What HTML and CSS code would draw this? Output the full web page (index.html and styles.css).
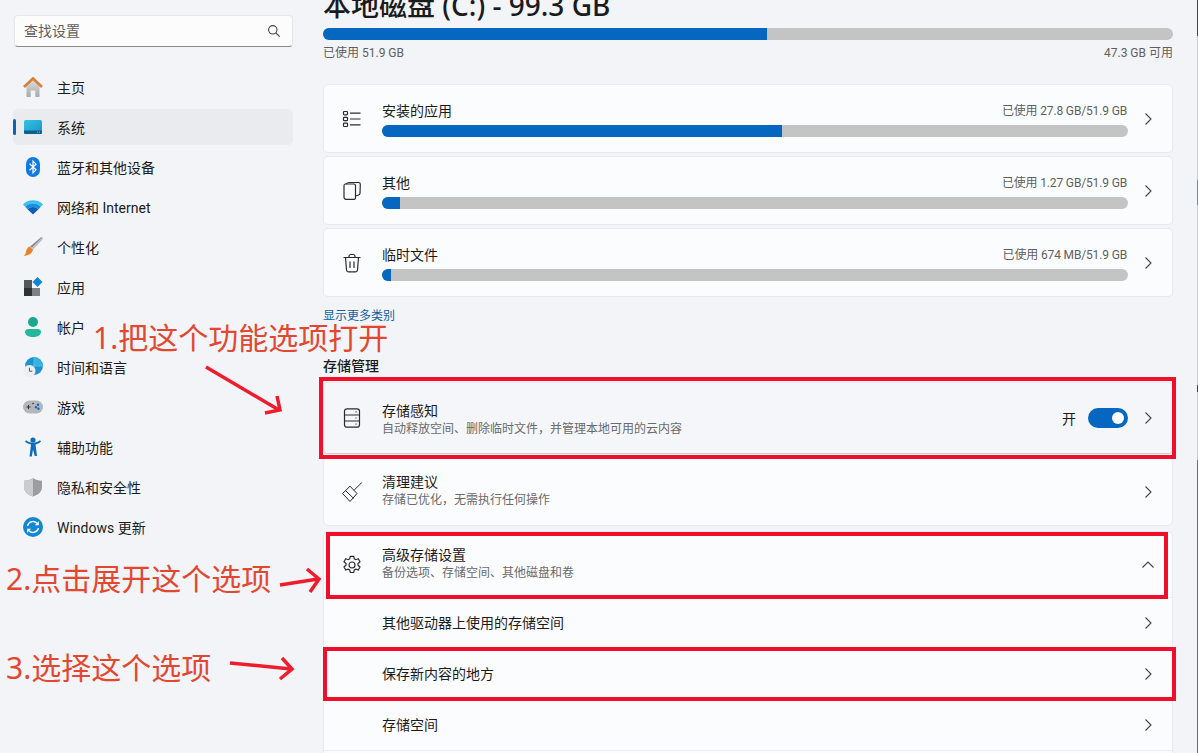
FILE: index.html
```html
<!DOCTYPE html>
<html lang="zh-CN">
<head>
    <meta charset="UTF-8">
    <meta name="viewport" content="width=device-width, initial-scale=1.0">
    <title>设置 - 存储</title>
    <link rel="stylesheet" href="styles.css">
</head>
<body>
    <div class="page">
        <!-- 左侧导航 -->
        <aside class="sidebar">
            <div class="search">
                <span>查找设置</span>
                <svg width="14" height="14" viewBox="0 0 14 14" fill="none" stroke="#444" stroke-width="1.1"><circle cx="5.8" cy="5.8" r="4.2"/><path d="M8.9 8.9l3.8 3.8"/></svg>
            </div>
            <nav class="nav">
                <div class="nav-item">
                    <svg class="nav-icon" viewBox="0 0 20 20"><defs><linearGradient id="wall" x1="0" y1="0" x2="0" y2="1"><stop offset="0" stop-color="#dcdcdc"/><stop offset="1" stop-color="#a9a9ab"/></linearGradient></defs><path d="M3.500 9L10 3l6.500 6v11h-4.200v-6.500H7.700V20H3.500z" fill="url(#wall)"/><path d="M1 10L10 1.500 19 10" fill="none" stroke="#d5843a" stroke-width="2.800"/></svg>
                    <span>主页</span>
                </div>
                <div class="nav-item active">
                    <svg class="nav-icon" viewBox="0 0 20 20"><defs><linearGradient id="screen" x1="0" y1="0" x2="1" y2="1"><stop offset="0" stop-color="#35c3e3"/><stop offset="1" stop-color="#1a94c6"/></linearGradient></defs><rect x="1" y="3" width="18" height="14" rx="1.500" fill="url(#screen)"/><path d="M1 13.500h18V15.500a1.500 1.500 0 0 1-1.500 1.500h-15A1.500 1.500 0 0 1 1 15.500z" fill="#0f5f8c"/><path d="M14 15.200h1M16 15.200h1" stroke="#cfe6f2" stroke-width=".7"/></svg>
                    <span>系统</span>
                </div>
                <div class="nav-item">
                    <svg class="nav-icon" viewBox="0 0 20 20"><rect x="3" y="0" width="14" height="20" rx="7" fill="#0f7be0"/><path d="M6.600 6.800l6.400 6-3 3V4.200l3 3-6.400 6" fill="none" stroke="#fff" stroke-width="1.200"/></svg>
                    <span>蓝牙和其他设备</span>
                </div>
                <div class="nav-item">
                    <svg class="nav-icon" viewBox="0 0 20 20"><path d="M0 7.500a14 14 0 0 1 20 0l-2.200 2.300a11 11 0 0 0-15.600 0z" fill="#3cc0f0"/><path d="M2.200 9.800a11 11 0 0 1 15.600 0l-2.300 2.400a8 8 0 0 0-11 0z" fill="#1a8fe0"/><path d="M4.500 12.200a8 8 0 0 1 11 0L10 17.500z" fill="#0b5fb8"/></svg>
                    <span>网络和 Internet</span>
                </div>
                <div class="nav-item">
                    <svg class="nav-icon" viewBox="0 0 20 20"><path d="M19.500 .5L9 11l-2-1.500L18 .2z" fill="#8d8d8f"/><path d="M19.500 .5L9 11l1 1.500L20 2z" fill="#bdbdc0"/><path d="M6.500 9.500l3.500 3c-.5 3.500-4 6-9.500 6.500 2.500-1.500 2-3.500 3-6 .5-1.500 1.500-3 3-3.500z" fill="#e9842c"/></svg>
                    <span>个性化</span>
                </div>
                <div class="nav-item">
                    <svg class="nav-icon" viewBox="0 0 20 20"><rect x="1" y="3" width="8" height="8" fill="#54585c"/><rect x="1" y="11" width="8" height="8" fill="#2f3235"/><rect x="9" y="11" width="8" height="8" fill="#7d8186"/><path d="M14.500 0l5 5-5 5-5-5z" fill="#1283d8"/></svg>
                    <span>应用</span>
                </div>
                <div class="nav-item">
                    <svg class="nav-icon" viewBox="0 0 20 20"><circle cx="10" cy="5" r="5" fill="#1ba88e"/><path d="M2 15c0-2 1.500-3 3.500-3h9c2 0 3.500 1 3.500 3 0 3-3.500 5-8 5s-8-2-8-5z" fill="#23b89c"/></svg>
                    <span>帐户</span>
                </div>
                <div class="nav-item">
                    <svg class="nav-icon" viewBox="0 0 20 20"><circle cx="11" cy="9" r="9" fill="#1f93cf"/><path d="M11 0a9 9 0 0 1 9 9h-9z" fill="#37b1e2"/><path d="M11 0v18M2 9h18" stroke="#7fd0ee" stroke-width=".5"/><circle cx="6.500" cy="14" r="6" fill="#eceef0"/><path d="M6.500 10.800v3.400h2.800" fill="none" stroke="#444" stroke-width=".9"/></svg>
                    <span>时间和语言</span>
                </div>
                <div class="nav-item">
                    <svg class="nav-icon" viewBox="0 0 20 20"><rect x="0" y="3.500" width="20" height="13" rx="6.500" fill="#b3b6bb"/><path d="M3.500 10h4M5.500 8v4" stroke="#333" stroke-width="1"/><circle cx="15" cy="7.800" r="1.200" fill="#1768b8"/><circle cx="13" cy="10.200" r="1.200" fill="#1768b8"/><circle cx="15.500" cy="11.800" r="1.200" fill="#1768b8"/><circle cx="10" cy="6.500" r=".8" fill="#333"/></svg>
                    <span>游戏</span>
                </div>
                <div class="nav-item">
                    <svg class="nav-icon" viewBox="0 0 20 20"><circle cx="10" cy="3" r="2.600" fill="#0f6cbd"/><path d="M2 4.500l1-1.300c2 1.600 4 2.300 7 2.300s5-.7 7-2.300l1 1.300c-1.800 1.700-3.500 2.600-5.500 3l1.500 11.500h-2.300L10 12.500 8.800 19.500H6.500L8 7.500c-2-.4-4.200-1.300-6-3z" fill="#0f6cbd"/></svg>
                    <span>辅助功能</span>
                </div>
                <div class="nav-item">
                    <svg class="nav-icon" viewBox="0 0 20 20"><path d="M10 1c2.500 1.800 5.500 2.700 9 2.700V10c0 4.500-3.500 8-9 9.500C4.500 18 1 14.500 1 10V3.700C4.500 3.700 7.500 2.800 10 1z" fill="#9b9da1"/><path d="M10 1v18.500C4.500 18 1 14.500 1 10V3.700C4.500 3.700 7.500 2.800 10 1z" fill="#c9cbcf"/></svg>
                    <span>隐私和安全性</span>
                </div>
                <div class="nav-item">
                    <svg class="nav-icon" viewBox="0 0 20 20"><circle cx="10" cy="10" r="10" fill="#1487d4"/><path d="M4.500 8.800A5.700 5.700 0 0 1 14.600 6.800M15.500 11.200A5.700 5.700 0 0 1 5.400 13.200" fill="none" stroke="#fff" stroke-width="1.400"/><path d="M15.800 4.200v4h-4zM4.200 15.800v-4h4z" fill="#fff"/></svg>
                    <span>Windows 更新</span>
                </div>
            </nav>
        </aside>

        <!-- 存储内容 -->
        <main class="content">
            <h1 class="disk-title">本地磁盘 (C:) - 99.3 GB</h1>
            <div class="bar disk-bar"><div class="bar-fill" style="width: 52.2%"></div></div>
            <div class="disk-info"><span>已使用 51.9 GB</span><span>47.3 GB 可用</span></div>

            <div class="card usage">
                <svg class="row-icon" viewBox="0 0 20 20"><rect x="1.500" y="2.500" width="4" height="3.400" rx=".8"/><rect x="1.500" y="8.300" width="4" height="3.400" rx=".8"/><rect x="1.500" y="14.100" width="4" height="3.400" rx=".8"/><path d="M8 4.200h10.500M8 10h10.500M8 15.800h10.500"/></svg>
                <div class="usage-main">
                    <div class="usage-head"><span>安装的应用</span><span class="usage-num">已使用 27.8 GB/51.9 GB</span></div>
                    <div class="bar"><div class="bar-fill" style="width: 53.6%"></div></div>
                </div>
                <svg class="chevron" viewBox="0 0 16 16"><path d="M5.500 2.500L11 8l-5.500 5.500"/></svg>
            </div>
            <div class="card usage">
                <svg class="row-icon" viewBox="0 0 20 20"><path d="M2 4.500c0-1 .7-1.500 1.500-1.500H12c1 0 1.500.7 1.500 1.500V17c0 .8-.7 1.300-1.500 1.300H4c-1 0-2-.8-2-2z"/><path d="M4 3c1-1 2-1.500 3-1.500h9.500c1 0 1.800.7 1.800 1.700l-.3 9c0 1-.7 1.500-1.500 1.800l-3 1"/></svg>
                <div class="usage-main">
                    <div class="usage-head"><span>其他</span><span class="usage-num">已使用 1.27 GB/51.9 GB</span></div>
                    <div class="bar"><div class="bar-fill" style="width: 2.4%"></div></div>
                </div>
                <svg class="chevron" viewBox="0 0 16 16"><path d="M5.500 2.500L11 8l-5.500 5.500"/></svg>
            </div>
            <div class="card usage">
                <svg class="row-icon" viewBox="0 0 20 20"><path d="M1.500 4.500h17M7 4.500V3.500a2 2 0 0 1 2-2h2a2 2 0 0 1 2 2v1M3.500 4.500l1 12.500a2 2 0 0 0 2 1.800h7a2 2 0 0 0 2-1.800l1-12.500M8 8.500v6.500M12 8.500v6.500"/></svg>
                <div class="usage-main">
                    <div class="usage-head"><span>临时文件</span><span class="usage-num">已使用 674 MB/51.9 GB</span></div>
                    <div class="bar"><div class="bar-fill" style="width: 1.2%"></div></div>
                </div>
                <svg class="chevron" viewBox="0 0 16 16"><path d="M5.500 2.500L11 8l-5.500 5.500"/></svg>
            </div>

            <a class="more-link">显示更多类别</a>
            <h2 class="section-title">存储管理</h2>

            <div class="card setting hovered">
                <svg class="row-icon" viewBox="0 0 20 20"><rect x="2.500" y=".8" width="15" height="18.400" rx="2.500"/><path d="M2.500 7h15M2.500 13h15M13.500 3.900h1M13.500 10h1M13.500 16.100h1"/></svg>
                <div class="setting-text">
                    <div>存储感知</div>
                    <div class="setting-sub">自动释放空间、删除临时文件，并管理本地可用的云内容</div>
                </div>
                <span class="state">开</span>
                <div class="toggle"><div class="knob"></div></div>
                <svg class="chevron" viewBox="0 0 16 16"><path d="M5.500 2.500L11 8l-5.500 5.500"/></svg>
            </div>
            <div class="card setting">
                <svg class="row-icon thin" viewBox="0 0 20 20"><path d="M19.800 .5L12 8.300M.6 11.500L8 4.200 15 11.500 8 19.500zM3.500 8.500l8 7.800"/></svg>
                <div class="setting-text">
                    <div>清理建议</div>
                    <div class="setting-sub">存储已优化，无需执行任何操作</div>
                </div>
                <svg class="chevron" viewBox="0 0 16 16"><path d="M5.500 2.500L11 8l-5.500 5.500"/></svg>
            </div>

            <div class="card group">
                <div class="group-row setting">
                    <svg class="row-icon" viewBox="0 0 20 20"><circle cx="10" cy="10" r="3"/><path d="M8.300 1.300h3.400l.6 2.600 1.500.8 2.500-.9 1.700 3-2 1.700v1.800l2 1.700-1.700 3-2.500-.9-1.500.8-.6 2.600H8.300l-.6-2.600-1.500-.8-2.500.9-1.700-3 2-1.700V8.500l-2-1.700 1.700-3 2.500.9 1.500-.8z"/></svg>
                    <div class="setting-text">
                        <div>高级存储设置</div>
                        <div class="setting-sub">备份选项、存储空间、其他磁盘和卷</div>
                    </div>
                    <svg class="chevron" viewBox="0 0 16 16"><path d="M2.500 10.500L8 5l5.500 5.500"/></svg>
                </div>
                <div class="group-row sub-row">
                    <span>其他驱动器上使用的存储空间</span>
                    <svg class="chevron" viewBox="0 0 16 16"><path d="M5.500 2.500L11 8l-5.500 5.500"/></svg>
                </div>
                <div class="group-row sub-row">
                    <span>保存新内容的地方</span>
                    <svg class="chevron" viewBox="0 0 16 16"><path d="M5.500 2.500L11 8l-5.500 5.500"/></svg>
                </div>
                <div class="group-row sub-row">
                    <span>存储空间</span>
                    <svg class="chevron" viewBox="0 0 16 16"><path d="M5.500 2.500L11 8l-5.500 5.500"/></svg>
                </div>
                <div class="group-row sub-row"></div>
            </div>
        </main>
    </div>

    <!-- 标注层 -->
    <div class="edge"></div>
    <div class="mark mark-1"></div>
    <div class="mark mark-2"></div>
    <div class="mark mark-3"></div>
    <div class="note note-1">1.把这个功能选项打开</div>
    <div class="note note-2">2.点击展开这个选项</div>
    <div class="note note-3">3.选择这个选项</div>
    <svg class="arrows" width="1198" height="753" viewBox="0 0 1198 753">
        <path d="M206 367L279 410M277 396L280 410L265 413"/>
        <path d="M280 585L318 579M307 569L319 579L310 592"/>
        <path d="M230 663L291 669M282 658L292 669L280 679"/>
    </svg>
</body>
</html>
```

FILE: styles.css
```css
html, body {
    margin: 0;
    padding: 0;
    height: 100%;
    overflow: hidden;
}

body {
    position: relative;
    background-color: #f2f4f8;
    color: #1b1b1b;
    font-family: Roboto, "Noto Sans CJK SC", sans-serif;
    font-size: 14px;
}

.page {
    display: flex;
    height: 753px;
    overflow: hidden;
}

/* 左侧导航 */
.sidebar {
    flex: 0 0 323px;
    box-sizing: border-box;
    padding: 15px 30px 0 13px;
}

.search {
    display: flex;
    align-items: center;
    justify-content: space-between;
    box-sizing: border-box;
    height: 32px;
    margin-left: 1px;
    padding: 0 11px 0 9px;
    background-color: #fcfcfd;
    border: 1px solid #e6e7ea;
    border-bottom-color: #8b8b8b;
    border-radius: 4px;
    color: #5f5f5f;
}

.search span {
    margin-top: -2px;
}

.nav {
    display: flex;
    flex-direction: column;
    gap: 4px;
    margin-top: 22px;
}

.nav-item {
    position: relative;
    display: flex;
    align-items: center;
    gap: 14px;
    height: 36px;
    padding-left: 10px;
    border-radius: 5px;
}

.nav-item.active {
    background-color: #eaebef;
}

.nav-item.active::before {
    content: "";
    position: absolute;
    left: 0;
    top: 10px;
    width: 3px;
    height: 16px;
    border-radius: 2px;
    background-color: #0f63b5;
}

.nav-icon {
    flex: none;
    width: 20px;
    height: 20px;
}

/* 存储内容 */
.content {
    flex: 0 0 850px;
    margin-top: -13px;
}

.disk-title {
    margin: 0 0 5px;
    font-family: "Noto Sans", "Noto Sans CJK SC", sans-serif;
    font-size: 28px;
    font-weight: 500;
    line-height: 36px;
}

.bar {
    height: 12px;
    border-radius: 6px;
    background-color: #c4c4c4;
    overflow: hidden;
}

.bar-fill {
    height: 100%;
    background-color: #0567c0;
}

.disk-info {
    display: flex;
    justify-content: space-between;
    margin: 5px 0 23px;
    color: #5f5f5f;
    font-size: 12px;
    line-height: 16px;
}

.card {
    box-sizing: border-box;
    background-color: #fbfcfe;
    border: 1px solid #e8e9ec;
    border-radius: 5px;
    margin-bottom: 3px;
}

.usage, .setting {
    display: flex;
    align-items: center;
    padding: 0 16px 0 18px;
}

.usage {
    height: 69px;
}

.row-icon {
    flex: none;
    width: 20px;
    height: 20px;
    margin-right: 20px;
    fill: none;
    stroke: #2b2b2b;
    stroke-width: 1.200;
}

.row-icon.thin {
    stroke-width: 1;
}

.usage-main {
    flex: 1;
    margin-right: 12px;
}

.usage-head {
    display: flex;
    align-items: center;
    justify-content: space-between;
    height: 20px;
    margin-bottom: 4px;
}

.usage-head span {
    margin-top: -2px;
}

.usage-num {
    margin-right: 1px;
    color: #5f5f5f;
    font-size: 12px;
    letter-spacing: -0.15px;
}

.chevron {
    flex: none;
    width: 16px;
    height: 16px;
    fill: none;
    stroke: #444;
    stroke-width: 1.100;
}

.more-link {
    display: block;
    margin-top: 10px;
    color: #115ea3;
    font-size: 12px;
    line-height: 18px;
}

.section-title {
    margin: 31px 0 6px;
    font-size: 14px;
    font-weight: 500;
    line-height: 20px;
}

.setting {
    height: 69px;
}

.setting-text {
    flex: 1;
    margin-top: -2px;
    line-height: 18px;
}

.setting-sub {
    margin-top: 1px;
    color: #6a6a6a;
    font-size: 12px;
    line-height: 17px;
}

.hovered {
    height: 72px;
    background-color: #f4f6f9;
    border-bottom-color: #c9cbd0;
}

.hovered .setting-text {
    padding-top: 5px;
}

.state {
    margin-right: 12px;
}

.toggle {
    display: flex;
    align-items: center;
    justify-content: flex-end;
    box-sizing: border-box;
    width: 40px;
    height: 20px;
    margin-right: 12px;
    padding-right: 4px;
    border-radius: 10px;
    background-color: #0567c0;
}

.knob {
    width: 12px;
    height: 12px;
    border-radius: 50%;
    background-color: #fff;
}

.group {
    margin-top: 5px;
    margin-bottom: 0;
}

.group-row {
    border-bottom: 1px solid #eceef1;
}

.group-row.setting {
    height: 65px;
}

.sub-row {
    display: flex;
    align-items: center;
    justify-content: space-between;
    box-sizing: border-box;
    height: 51px;
    padding: 0 16px 0 58px;
}

.sub-row span {
    margin-top: -2px;
}

/* 标注层 */
.edge {
    position: absolute;
    right: 0;
    top: 0;
    width: 1px;
    height: 753px;
    background: linear-gradient(#45464a 0 36px, #c9cbce 36px 180px, #6f8da0 180px 205px, #c9cbce 205px 385px, #3d4050 385px 392px, #c9cbce 392px 460px, #6d6e72 460px);
}

.mark {
    position: absolute;
    box-sizing: border-box;
    border: 4px solid #ef0f2a;
}

.mark-1 {
    left: 319px;
    top: 377px;
    width: 857px;
    height: 82px;
}

.mark-2 {
    left: 326px;
    top: 532px;
    width: 842px;
    height: 67px;
}

.mark-3 {
    left: 323px;
    top: 647px;
    width: 853px;
    height: 54px;
}

.note {
    position: absolute;
    color: #e4472f;
    font-family: "Noto Sans", "Noto Sans CJK SC", sans-serif;
    font-size: 30px;
    line-height: 40px;
    white-space: nowrap;
}

.note-1 {
    left: 93px;
    top: 318px;
}

.note-2 {
    left: 6px;
    top: 559px;
}

.note-3 {
    left: 6px;
    top: 648px;
}

.arrows {
    position: absolute;
    left: 0;
    top: 0;
    fill: none;
    stroke: #ef1c2e;
    stroke-width: 3.500;
}
```
